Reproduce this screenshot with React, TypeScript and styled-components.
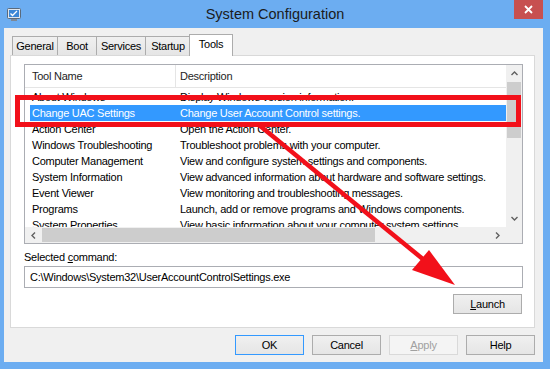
import styled, { createGlobalStyle } from 'styled-components'

const GlobalStyle = createGlobalStyle`
  html, body {
    margin: 0;
    padding: 0;
  }
  body {
    font-family: 'Liberation Sans', Arial, sans-serif;
    background: #6cadf1;
  }
`

const tools = [
  ['About Windows', 'Display Windows version information.'],
  ['Change UAC Settings', 'Change User Account Control settings.'],
  ['Action Center', 'Open the Action Center.'],
  ['Windows Troubleshooting', 'Troubleshoot problems with your computer.'],
  ['Computer Management', 'View and configure system settings and components.'],
  ['System Information', 'View advanced information about hardware and software settings.'],
  ['Event Viewer', 'View monitoring and troubleshooting messages.'],
  ['Programs', 'Launch, add or remove programs and Windows components.'],
  ['System Properties', 'View basic information about your computer system settings.'],
]

const tabs = [
  { label: 'General', w: 46 },
  { label: 'Boot', w: 40 },
  { label: 'Services', w: 50 },
  { label: 'Startup', w: 46 },
  { label: 'Tools', w: 44, active: true },
]

const Window = styled.div`
  position: relative;
  width: 550px;
  height: 369px;
  background: #6cadf1;
  display: flex;
  flex-direction: column;
  overflow: hidden;
  font-size: 11px;
  letter-spacing: -0.25px;
  color: #000;
`

const TitleBar = styled.div`
  height: 28px;
  flex: none;
  display: grid;
  grid-template-columns: 1fr auto 1fr;
  align-items: start;
`

const AppIcon = styled.div`
  margin: 7px 0 0 7px;
  width: 15px;
  height: 15px;
`

const Title = styled.div`
  font-size: 14.5px;
  letter-spacing: 0;
  line-height: 28px;
  color: #1b1b1b;
`

const CloseBtn = styled.div`
  justify-self: end;
  width: 29px;
  height: 19px;
  margin-right: 7px;
  background: #c75050;
  display: flex;
  align-items: center;
  justify-content: center;
`

const Client = styled.div`
  flex: 1;
  margin: 0 7px 7px 4px;
  background: #f0f0f0;
  padding: 6px 8px 7px 6px;
  display: flex;
  flex-direction: column;
`

const TabStrip = styled.div`
  height: 21px;
  padding-left: 2px;
  display: flex;
  align-items: flex-end;
  position: relative;
  z-index: 1;
`

const Tab = styled.div<{ $w: number; $active?: boolean }>`
  box-sizing: border-box;
  width: ${(p) => p.$w}px;
  height: ${(p) => (p.$active ? 22 : 19)}px;
  margin-bottom: ${(p) => (p.$active ? -1 : 0)}px;
  margin-left: ${(p) => (p.$active ? -2 : -1)}px;
  border: 1px solid #acacac;
  border-bottom: none;
  background: ${(p) => (p.$active ? '#fff' : 'linear-gradient(#f0f0f0, #e5e5e5)')};
  display: flex;
  align-items: center;
  justify-content: center;
  padding-bottom: ${(p) => (p.$active ? 3 : 0)}px;
  &:first-child {
    margin-left: 0;
  }
`

const Panel = styled.div`
  box-sizing: border-box;
  height: 273px;
  border: 1px solid #d9d9d9;
  background: #fff;
  padding: 8px 11px 0 13px;
  display: flex;
  flex-direction: column;
`

const ListView = styled.div`
  box-sizing: border-box;
  height: 180px;
  border: 1px solid #abadb3;
  display: grid;
  grid-template-columns: 1fr 16px;
  grid-template-rows: 1fr 16px;
`

const ListBody = styled.div`
  overflow: hidden;
`

const HeaderRow = styled.div`
  height: 22px;
  border-bottom: 1px solid #e5e5e5;
  display: grid;
  grid-template-columns: 150px 1fr;
  color: #1e1e1e;
`

const HeaderCell = styled.div<{ $pad: number }>`
  padding-left: ${(p) => p.$pad}px;
  display: flex;
  align-items: center;
  & + & {
    border-left: 1px solid #e5e5e5;
  }
`

const Rows = styled.div`
  padding-top: 1px;
`

const Row = styled.div<{ $selected?: boolean }>`
  height: 16px;
  margin-left: 5px;
  display: grid;
  grid-template-columns: 148px 1fr;
  align-items: center;
  white-space: nowrap;
  background: ${(p) => (p.$selected ? '#3399ff' : 'transparent')};
  color: ${(p) => (p.$selected ? '#fff' : '#000')};
`

const Cell = styled.div`
  padding-left: 2px;
  overflow: hidden;
`

const VScroll = styled.div`
  background: #f0f0f0;
  display: flex;
  flex-direction: column;
`

const HScroll = styled.div`
  background: #f0f0f0;
  display: flex;
`

const ArrowBox = styled.div`
  flex: none;
  width: 16px;
  height: 17px;
  display: flex;
  align-items: center;
  justify-content: center;
`

const HArrowBox = styled(ArrowBox)`
  width: 17px;
  height: 16px;
`

const Thumb = styled.div<{ $size: number; $vertical?: boolean }>`
  flex: none;
  background: #cdcdcd;
  ${(p) => (p.$vertical ? `height: ${p.$size}px; margin: 0 1px;` : `width: ${p.$size}px; margin: 1px 0;`)}
`

const Spacer = styled.div`
  flex: 1;
`

const Corner = styled.div`
  background: #f0f0f0;
`

const Label = styled.div`
  margin-top: 6px;
  height: 15px;
  line-height: 15px;
  color: #000;
`

const TextBox = styled.div`
  box-sizing: border-box;
  margin-top: 1px;
  height: 22px;
  border: 1px solid #abadb3;
  padding-left: 5px;
  display: flex;
  align-items: center;
  color: #000;
`

const LaunchRow = styled.div`
  margin-top: 6px;
  display: flex;
  justify-content: flex-end;
  padding-right: 1px;
`

const Button = styled.div<{ $default?: boolean; $disabled?: boolean }>`
  box-sizing: border-box;
  width: 69px;
  height: 20px;
  border: 1px solid ${(p) => (p.$default ? '#3399ff' : p.$disabled ? '#d9d9d9' : '#acacac')};
  background: ${(p) => (p.$disabled ? '#f4f4f4' : 'linear-gradient(#f0f0f0, #e5e5e5)')};
  color: ${(p) => (p.$disabled ? '#a0a0a0' : '#000')};
  display: flex;
  align-items: center;
  justify-content: center;
`

const ButtonBar = styled.div`
  margin-top: 7px;
  display: flex;
  justify-content: flex-end;
  gap: 8px;
`

const Annotation = styled.svg`
  position: absolute;
  left: 0;
  top: 0;
  pointer-events: none;
`

function Chevron({ dir }: { dir: 'up' | 'down' | 'left' | 'right' }) {
  const rot = { up: 0, right: 90, down: 180, left: 270 }[dir]
  return (
    <svg width="9" height="9" viewBox="0 0 9 9">
      <path
        d="M1.5 6 L4.5 3 L7.5 6"
        fill="none"
        stroke="#606060"
        strokeWidth="1.4"
        transform={`rotate(${rot} 4.5 4.5)`}
      />
    </svg>
  )
}

export default function App() {
  return (
    <Window>
      <GlobalStyle />
      <TitleBar>
        <AppIcon>
          <svg width="15" height="15" viewBox="0 0 15 15">
            <rect x="0.5" y="1.5" width="13" height="10" rx="1" fill="#dfe6ee" stroke="#5a6a7c" />
            <rect x="2" y="3" width="10" height="7" fill="#3b86d6" />
            <path d="M3.5 6.5 L5.5 8.5 L10 4" fill="none" stroke="#fff" strokeWidth="1.3" />
            <rect x="4" y="12" width="6" height="2" fill="#7d8896" />
          </svg>
        </AppIcon>
        <Title>System Configuration</Title>
        <CloseBtn>
          <svg width="9" height="9" viewBox="0 0 9 9">
            <path d="M1 1 L8 8 M8 1 L1 8" stroke="#fff" strokeWidth="1.8" />
          </svg>
        </CloseBtn>
      </TitleBar>

      <Client>
        <TabStrip>
          {tabs.map((t) => (
            <Tab key={t.label} $w={t.w} $active={t.active}>
              {t.label}
            </Tab>
          ))}
        </TabStrip>

        <Panel>
          <ListView>
            <ListBody>
              <HeaderRow>
                <HeaderCell $pad={7}>Tool Name</HeaderCell>
                <HeaderCell $pad={4}>Description</HeaderCell>
              </HeaderRow>
              <Rows>
                {tools.map(([name, desc]) => (
                  <Row key={name} $selected={name === 'Change UAC Settings'}>
                    <Cell>{name}</Cell>
                    <Cell>{desc}</Cell>
                  </Row>
                ))}
              </Rows>
            </ListBody>
            <VScroll>
              <ArrowBox>
                <Chevron dir="up" />
              </ArrowBox>
              <Thumb $vertical $size={56} />
              <Spacer />
              <ArrowBox>
                <Chevron dir="down" />
              </ArrowBox>
            </VScroll>
            <HScroll>
              <HArrowBox>
                <Chevron dir="left" />
              </HArrowBox>
              <Thumb $size={333} />
              <Spacer />
              <HArrowBox>
                <Chevron dir="right" />
              </HArrowBox>
            </HScroll>
            <Corner />
          </ListView>

          <Label>
            Selected <u>c</u>ommand:
          </Label>
          <TextBox>C:\Windows\System32\UserAccountControlSettings.exe</TextBox>
          <LaunchRow>
            <Button>
              <u>L</u>aunch
            </Button>
          </LaunchRow>
        </Panel>

        <ButtonBar>
          <Button $default>OK</Button>
          <Button>Cancel</Button>
          <Button $disabled>
            <u>A</u>pply
          </Button>
          <Button>Help</Button>
        </ButtonBar>
      </Client>

      <Annotation width="550" height="369" viewBox="0 0 550 369">
        <rect x="17.5" y="97.5" width="501" height="27" fill="none" stroke="#f2101a" strokeWidth="5" />
        <line x1="259" y1="125" x2="424" y2="260" stroke="#f2101a" strokeWidth="4.5" />
        <polygon points="455,285 412,270 429,250" fill="#f2101a" />
      </Annotation>
    </Window>
  )
}
